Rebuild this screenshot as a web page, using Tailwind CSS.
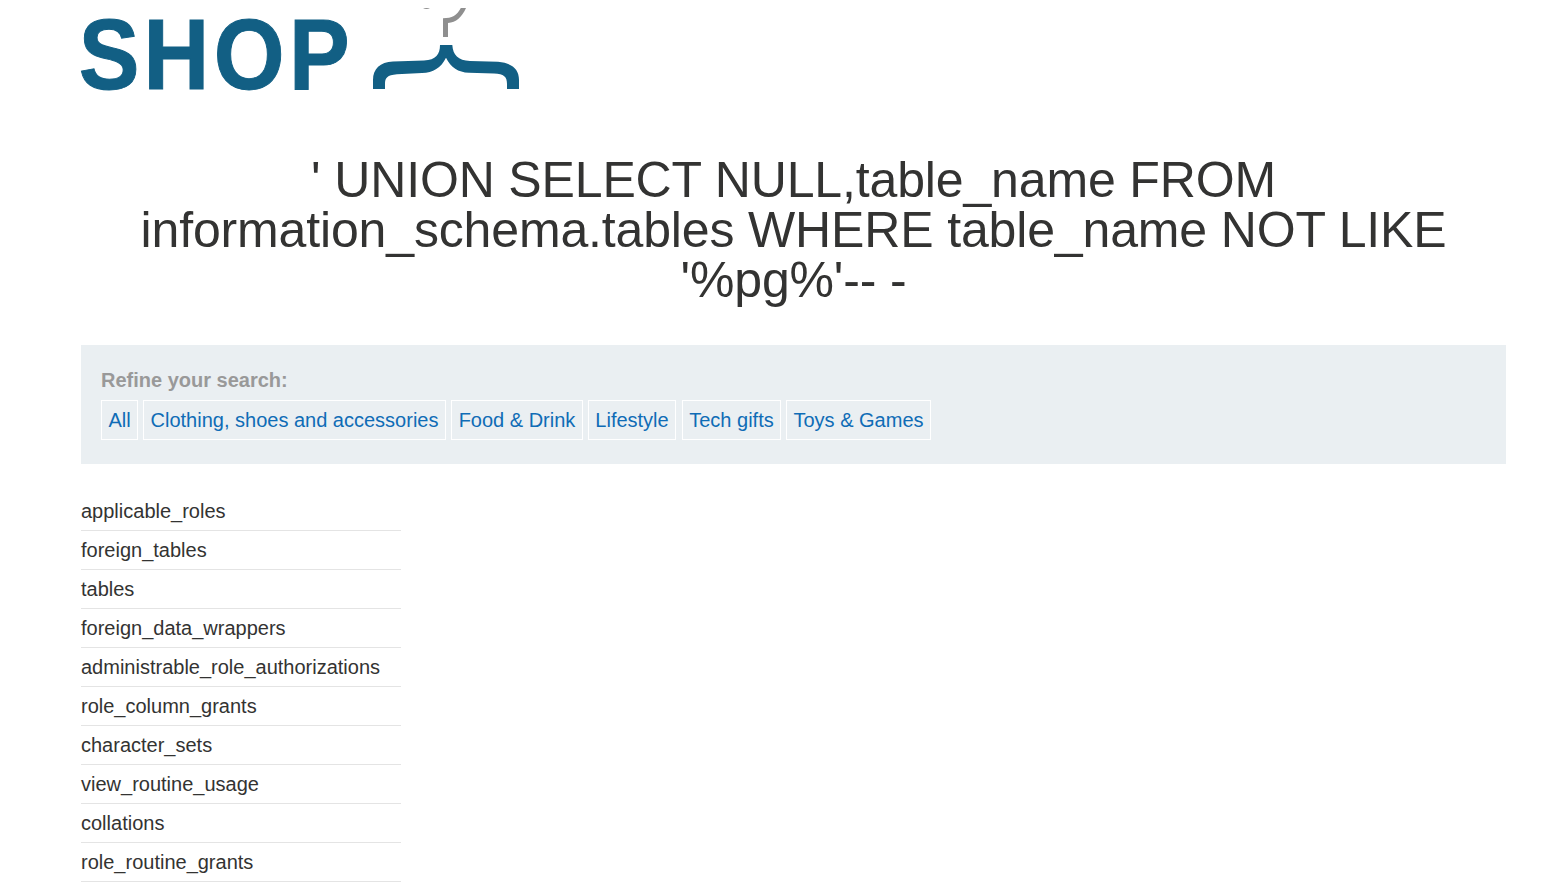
<!DOCTYPE html>
<html lang="en">
<head>
<meta charset="utf-8">
<title>Shop</title>
<script src="https://cdn.jsdelivr.net/npm/@tailwindcss/browser@4"></script>
</head>
<body class="h-[883px] overflow-hidden bg-white font-['Liberation_Sans',Arial,sans-serif] text-[#333332]">
<div class="ml-[81px] w-[1425px]">
  <header class="h-[155px]">
    <svg class="block h-[100px] w-[450px] overflow-visible" viewBox="81 0 450 100">
      <text transform="translate(78.800 89.100)  scale(.91 1)" x="0 71.200 148.400 231" font-family="Liberation Sans" font-weight="700" font-size="100" fill="#125f84" stroke="#125f84" stroke-width="1">SHOP</text>
      <path d="M423 8h7q-3.500 2-7 0z" fill="#8f8f8f"/>
      <path d="M466 8C462 17 456 22.500 448 22.900V37H443V18.200C452 18.200 457 15.500 460.800 8Z" fill="#8f8f8f"/>
      <path d="M440 45H452.300C453 55 458 60.500 470 61L498 61.800C512 63 519 69 519 80V89H507V84C507 77 504 73.800 494 73.600L469 72.800C458 72 451 68 446 57.700C441 68 433 72.500 422 73L397 74.200C387 75 385 78 385 84V89H373V80C373 69 380 62 393 61.500L424 60.500C436 60 440 54 440 45Z" fill="#125f84"/>
    </svg>
  </header>
  <h1 class="text-center text-[50px] leading-[50px] tracking-[-0.15px]">' UNION SELECT NULL,table_name FROM<br>information_schema.tables WHERE table_name NOT LIKE<br>'%pg%'-- -</h1>
  <section class="mt-10 h-[119px] bg-[#eaeff2] px-5 pt-5">
    <p class="h-[35px] text-xl leading-[30px] font-bold text-[#999999]">Refine your search:</p>
    <nav class="flex gap-[5px] text-xl leading-[38px] whitespace-nowrap text-[#0f6cb6]">
      <a class="w-[37px] border border-white text-center">All</a>
      <a class="w-[303px] border border-white text-center">Clothing, shoes and accessories</a>
      <a class="w-[132px] border border-white text-center">Food &amp; Drink</a>
      <a class="w-[88px] border border-white text-center">Lifestyle</a>
      <a class="ml-px w-[99px] border border-white text-center">Tech gifts</a>
      <a class="w-[145px] border border-white text-center">Toys &amp; Games</a>
    </nav>
  </section>
  <ul class="mt-7 w-80 text-xl leading-[38px]">
    <li class="border-b border-[#e4e4e4]">applicable_roles</li>
    <li class="border-b border-[#e4e4e4]">foreign_tables</li>
    <li class="border-b border-[#e4e4e4]">tables</li>
    <li class="border-b border-[#e4e4e4]">foreign_data_wrappers</li>
    <li class="border-b border-[#e4e4e4]">administrable_role_authorizations</li>
    <li class="border-b border-[#e4e4e4]">role_column_grants</li>
    <li class="border-b border-[#e4e4e4]">character_sets</li>
    <li class="border-b border-[#e4e4e4]">view_routine_usage</li>
    <li class="border-b border-[#e4e4e4]">collations</li>
    <li class="border-b border-[#e4e4e4]">role_routine_grants</li>
  </ul>
</div>
</body>
</html>
